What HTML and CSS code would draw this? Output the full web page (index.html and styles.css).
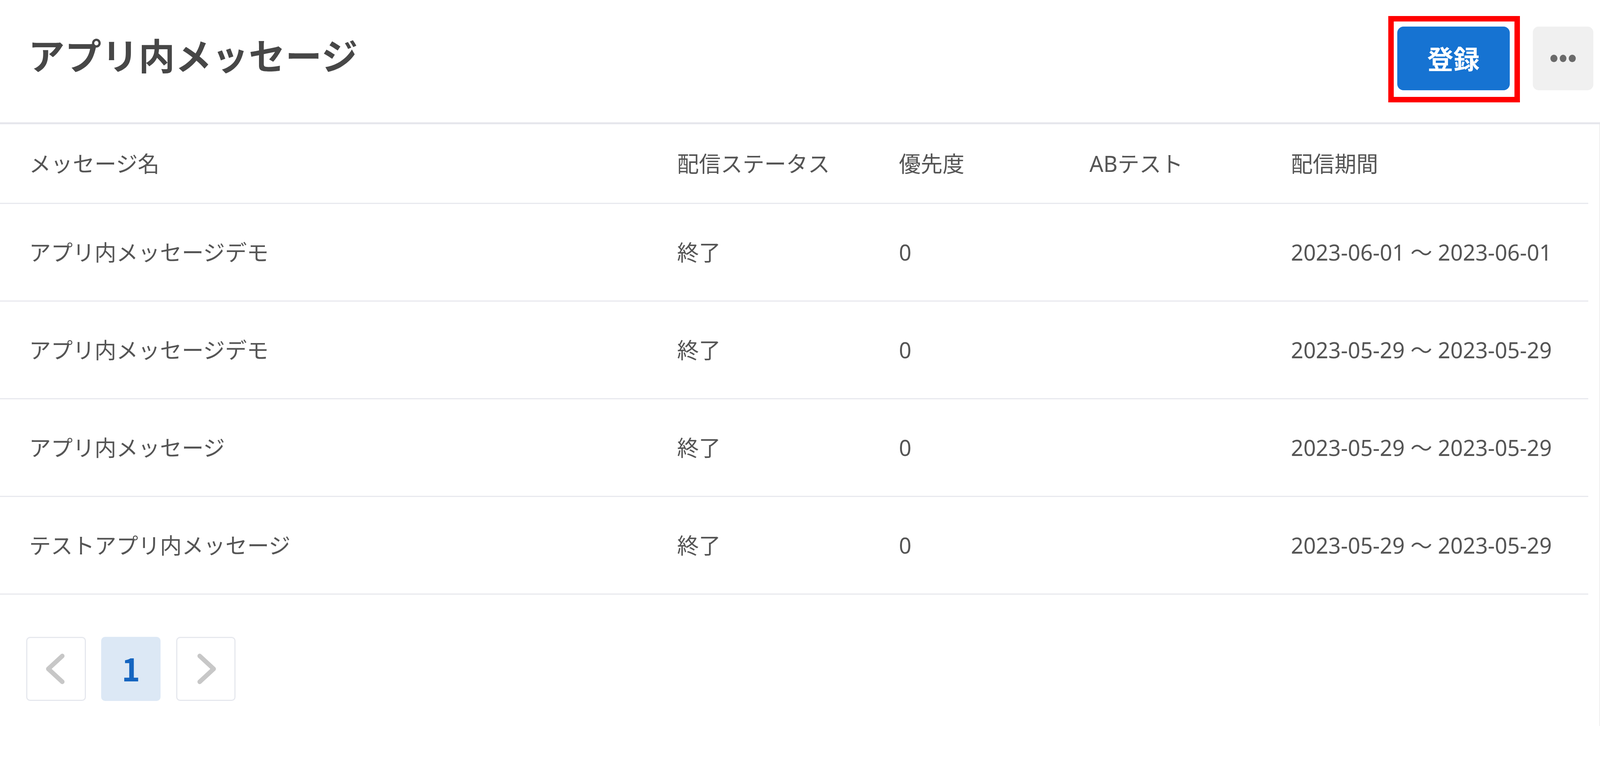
FILE: index.html
```html
<!DOCTYPE html>
<html lang="ja">
<head>
<meta charset="utf-8">
<title>アプリ内メッセージ</title>
<link rel="stylesheet" href="styles.css">
</head>
<body>
<header class="page-header">
  <h1 class="page-title">アプリ内メッセージ</h1>
  <div class="header-actions">
    <div class="highlight">
      <button class="btn-primary" type="button">登録</button>
    </div>
    <button class="btn-more" type="button" aria-label="その他">
      <span class="dot"></span><span class="dot"></span><span class="dot"></span>
    </button>
  </div>
</header>
<main class="content">
  <div class="table">
    <div class="row head">
      <div class="cell">メッセージ名</div>
      <div class="cell">配信ステータス</div>
      <div class="cell">優先度</div>
      <div class="cell">ABテスト</div>
      <div class="cell">配信期間</div>
    </div>
    <div class="row">
      <div class="cell">アプリ内メッセージデモ</div>
      <div class="cell">終了</div>
      <div class="cell">0</div>
      <div class="cell"></div>
      <div class="cell">2023-06-01 ～ 2023-06-01</div>
    </div>
    <div class="row">
      <div class="cell">アプリ内メッセージデモ</div>
      <div class="cell">終了</div>
      <div class="cell">0</div>
      <div class="cell"></div>
      <div class="cell">2023-05-29 ～ 2023-05-29</div>
    </div>
    <div class="row">
      <div class="cell">アプリ内メッセージ</div>
      <div class="cell">終了</div>
      <div class="cell">0</div>
      <div class="cell"></div>
      <div class="cell">2023-05-29 ～ 2023-05-29</div>
    </div>
    <div class="row">
      <div class="cell">テストアプリ内メッセージ</div>
      <div class="cell">終了</div>
      <div class="cell">0</div>
      <div class="cell"></div>
      <div class="cell">2023-05-29 ～ 2023-05-29</div>
    </div>
  </div>
  <nav class="pager">
    <button class="page-btn arrow" type="button" aria-label="前へ">
      <svg class="chev" viewBox="0 0 164 164"><polyline points="100,45 60,82 100,119" fill="none" stroke="#c7c7c7" stroke-width="13" stroke-linecap="round" stroke-linejoin="round"/></svg>
    </button>
    <button class="page-btn current" type="button">1</button>
    <button class="page-btn arrow" type="button" aria-label="次へ">
      <svg class="chev" viewBox="0 0 164 164"><polyline points="64,45 104,82 64,119" fill="none" stroke="#c7c7c7" stroke-width="13" stroke-linecap="round" stroke-linejoin="round"/></svg>
    </button>
  </nav>
</main>
</body>
</html>
```
FILE: styles.css
```css
:root {
  --u: calc(100vw / 4400);
}
* { box-sizing: border-box; }
html, body {
  margin: 0;
  padding: 0;
  background: #ffffff;
}
body {
  width: 100%;
  overflow-x: hidden;
  font-family: "Noto Sans CJK JP", "Noto Sans", sans-serif;
  color: #555555;
}
.page-header {
  height: 318px;
  border-bottom: 5px solid #e6e7ec;
  display: flex;
  justify-content: space-between;
  align-items: flex-start;
  padding: 0 calc(18 * var(--u)) 0 calc(78 * var(--u));
}
.page-title {
  margin: 92px 0 0 0;
  font-size: calc(100 * var(--u));
  line-height: 1;
  font-weight: 700;
  color: #474747;
  letter-spacing: calc(1 * var(--u));
  white-space: nowrap;
}
.header-actions {
  display: flex;
  align-items: flex-start;
  gap: calc(35 * var(--u));
  margin-top: 41px;
}
.highlight {
  border: 14px solid #ff0000;
  padding: 13px calc(13 * var(--u)) 17px calc(9 * var(--u));
}
.btn-primary {
  display: flex;
  align-items: center;
  justify-content: center;
  width: calc(310 * var(--u));
  height: 163px;
  border: none;
  border-radius: 16px;
  background: #1673d2;
  color: #ffffff;
  font-family: "Noto Sans CJK JP", sans-serif;
  font-size: calc(72 * var(--u));
  font-weight: 700;
  line-height: 1;
  padding: 0 0 4px 0;
  white-space: nowrap;
}
.btn-more {
  display: flex;
  align-items: center;
  justify-content: center;
  gap: calc(6 * var(--u));
  width: calc(167 * var(--u));
  height: 163px;
  border: none;
  border-radius: 15px;
  background: #f0f0f0;
  padding: 0;
  margin-top: 27px;
}
.dot {
  width: calc(19 * var(--u));
  height: 19px;
  border-radius: 50%;
  background: #6a6a6a;
}
.content {
  height: 1540px;
  border-right: calc(3 * var(--u)) solid #efefef;
}
.table {
  width: calc(4368 * var(--u));
}
.row {
  display: grid;
  grid-template-columns: calc(1782 * var(--u)) calc(610 * var(--u)) calc(524 * var(--u)) calc(554 * var(--u)) 1fr;
  align-items: center;
  height: 250px;
  padding-left: calc(80 * var(--u));
  border-bottom: 3px solid #e8e9ee;
  font-family: "Noto Sans", "Noto Sans CJK JP", sans-serif;
  font-size: calc(60 * var(--u));
  font-weight: 400;
  line-height: 1;
  color: #555555;
}
.row.head {
  height: 204px;
}
.cell {
  white-space: nowrap;
}
.pager {
  display: flex;
  gap: calc(42 * var(--u));
  padding: 108px 0 0 calc(72 * var(--u));
}
.page-btn {
  width: calc(164 * var(--u));
  height: 164px;
  border-radius: 10px;
  display: flex;
  align-items: center;
  justify-content: center;
  padding: 0;
  font-family: "Noto Sans CJK JP", sans-serif;
}
.chev {
  width: calc(158 * var(--u));
  height: 158px;
}
.page-btn.arrow {
  background: #ffffff;
  border: 3px solid #e6e8ee;
}
.page-btn.current {
  background: #dce8f5;
  border: none;
  color: #1565c0;
  font-size: calc(86 * var(--u));
  font-weight: 700;
  line-height: 1;
  padding-bottom: 6px;
}
```
